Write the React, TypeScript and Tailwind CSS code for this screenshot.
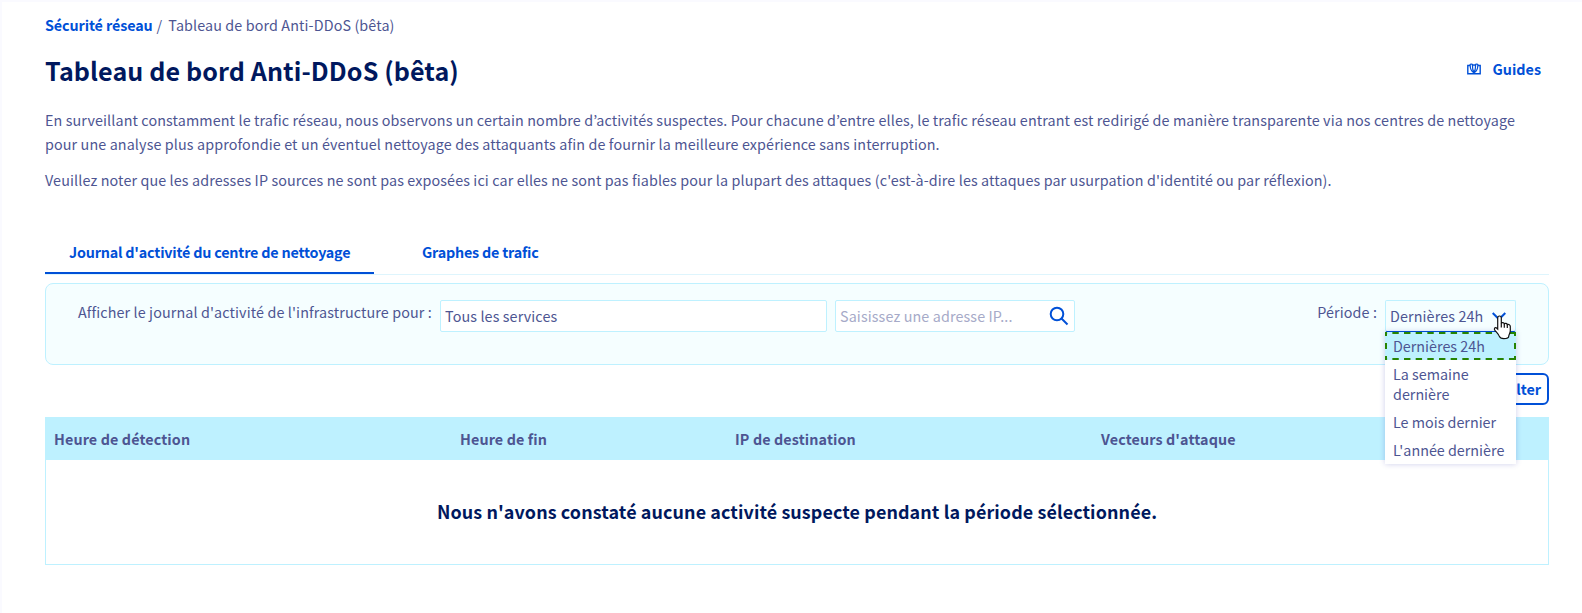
import React from "react";

const periods = ["Dernières 24h", "La semaine dernière", "Le mois dernier", "L'année dernière"];

function GuidesIcon() {
  return (
    <svg width="14" height="12" viewBox="0 0 14 12" fill="none" stroke="#0050d7" strokeWidth="1.4">
      <path d="M3 2.500H.8v8.200h12.400V2.500H11" />
      <path d="M3.200 1C3 5 3.500 8 7 9.800 10.500 8 11 5 10.800 1M3.200 1.300C4.700.8 6.200 1.300 7 2.500 7.800 1.300 9.300.8 10.800 1.300M5.400 1.500C5.300 5 5.700 7.500 7 9.500 8.300 7.500 8.700 5 8.600 1.500" strokeWidth="1.200" />
    </svg>
  );
}

function SearchIcon() {
  return (
    <svg width="20" height="20" viewBox="0 0 20 20" fill="none" stroke="#0050d7" strokeWidth="2">
      <circle cx="8" cy="8" r="6.3" />
      <path d="M12.500 12.500 18.500 18.500" />
    </svg>
  );
}

function HandCursor() {
  return (
    <svg width="19" height="25" viewBox="0 0 19 25" className="absolute left-[107px] top-[14px] z-20">
      <path
        d="M6.500 1C7.700 1 8.300 1.900 8.300 3v5.300C8.600 7.500 11 7.400 11.300 8.700 12.200 8 14 8.200 14.300 9.600 15.600 9 17.300 9.700 17.300 11.600v4.200c0 2.200-1.500 3.700-1.500 5.200 0 1.200-1.800 2.600-5 2.600-2.700 0-4-1-4.600-2.500C5.300 18.900 3.500 17.300 1.900 15.300.8 13.900 1.700 12 3.300 12.700L4.700 14V3C4.700 1.900 5.300 1 6.500 1Z"
        fill="#fff"
        stroke="#111"
        strokeWidth="1.200"
      />
      <path d="M8.300 8v4.500M11.300 8.700v4M14.300 9.600v3.400" stroke="#111" strokeWidth="1.200" />
    </svg>
  );
}

function FocusRing() {
  return (
    <svg width="131" height="28" viewBox="0 0 131 28" className="absolute left-0 top-0" fill="none" stroke="#268403" strokeWidth="2">
      <path d="M0 1H131M0 27H131" strokeDasharray="6.400 5.260" strokeDashoffset="4.300" />
      <path d="M1 0V28M130 0V28" strokeDasharray="4 7 6 7 4 7" />
    </svg>
  );
}

export default function App() {
  return (
    <div className="h-[613px] w-[1582px] overflow-hidden border-l-2 border-t-2 border-[#fafaff] bg-white pl-[43px] pr-[33px] font-['Noto_Sans_CJK_KR','Noto_Sans',sans-serif] text-[14.33px] leading-6 tracking-[0.115px] text-[#4d5592]">
      <nav className="flex h-6 pt-[11px] whitespace-pre">
        <a className="font-bold tracking-[-0.1px] text-[#0050d7]">Sécurité réseau</a>
        <span className="ml-1">/</span>
        <span className="ml-[6px]">Tableau de bord Anti-DDoS (bêta)</span>
      </nav>
      <header className="mt-[24px] flex h-10 items-center justify-between">
        <h1 className="text-[25.080px] leading-10 font-bold tracking-[0.1px] whitespace-nowrap text-[#00185e]">Tableau de bord Anti-DDoS (bêta)</h1>
        <a className="flex items-center gap-3 pb-[2px] pr-2 font-bold tracking-normal text-[#0050d7]">
          <GuidesIcon />
          <span>Guides</span>
        </a>
      </header>
      <div className="mt-[18px] whitespace-nowrap">
        <p>
          En surveillant constamment le trafic réseau, nous observons un certain nombre d’activités suspectes. Pour chacune d’entre elles, le trafic réseau entrant est redirigé de manière transparente via nos centres de nettoyage
          <br />
          pour une analyse plus approfondie et un éventuel nettoyage des attaquants afin de fournir la meilleure expérience sans interruption.
        </p>
        <p className="mt-3">
          Veuillez noter que les adresses IP sources ne sont pas exposées ici car elles ne sont pas fiables pour la plupart des attaques (c'est-à-dire les attaques par usurpation d'identité ou par réflexion).
        </p>
      </div>
      <div className="mt-[40px] flex h-[43px] border-b border-[#def5fd] font-bold tracking-[-0.195px] whitespace-nowrap text-[#0050d7]">
        <div className="h-[42px] w-[329px] border-b-2 border-[#0050d7] pl-6 pt-[8px]">Journal d'activité du centre de nettoyage</div>
        <div className="pl-12 pt-[8px]">Graphes de trafic</div>
      </div>
      <section className="mt-2 flex h-[82px] rounded-lg border border-[#bef1ff] bg-[#f5feff] pl-8 pr-8 pt-4">
        <label className="w-[362px] shrink-0 whitespace-nowrap">Afficher le journal d'activité de l'infrastructure pour :</label>
        <div className="h-8 w-[387px] shrink-0 rounded-xs border border-[#bef1ff] bg-white pl-[4px] pt-[3px]">Tous les services</div>
        <div className="ml-2 flex h-8 w-[240px] shrink-0 justify-between rounded-xs border border-[#bef1ff] bg-white pl-[4px] pr-[5px] pt-[3px] text-[#a6aac8]">
          <span>Saisissez une adresse IP...</span>
          <span className="pt-[2px]"><SearchIcon /></span>
        </div>
        <label className="ml-auto mr-2 whitespace-nowrap">Période :</label>
        <div className="relative h-8 w-[131px] shrink-0 rounded-xs border border-b-[#0050d7] border-[#bef1ff] bg-[#f5feff] pl-[4px] pt-[3px] whitespace-nowrap">
          Dernières 24h
          <svg width="14" height="9" viewBox="0 0 14 9" className="absolute left-[106px] top-[11px]" fill="none" stroke="#0050d7" strokeWidth="2">
            <path d="M.7 1 7 7.300 13.300 1" />
          </svg>
          <HandCursor />
          <ul className="absolute -left-px top-[31px] z-10 w-[131px] bg-white leading-5 tracking-normal shadow-[0_0_6px_rgba(0,14,156,0.2)]">
            {periods.map((period, i) => (
              <li key={period} className={i === 0 ? "relative bg-[#bef1ff] px-2 py-1" : "px-2 py-1 whitespace-normal"}>
                {period}
                {i === 0 && <FocusRing />}
              </li>
            ))}
          </ul>
        </div>
      </section>
      <div className="mt-2 flex h-8 justify-end">
        <button className="h-8 rounded-md border-2 border-[#0050d7] px-1.5 leading-7 font-bold tracking-normal text-[#0050d7]">Consulter</button>
      </div>
      <div className="mt-3 h-[148px] border border-[#bef1ff]">
        <div className="flex h-[42px] items-center bg-[#bef1ff] pl-2 font-bold whitespace-nowrap">
          <div className="w-[406px]">Heure de détection</div>
          <div className="w-[275px]">Heure de fin</div>
          <div className="w-[366px]">IP de destination</div>
          <div>Vecteurs d'attaque</div>
        </div>
        <p className="pt-[36px] text-center text-[17.910px] leading-[30px] font-bold tracking-[0.1px] text-[#00185e]">Nous n'avons constaté aucune activité suspecte pendant la période sélectionnée.</p>
      </div>
    </div>
  );
}
